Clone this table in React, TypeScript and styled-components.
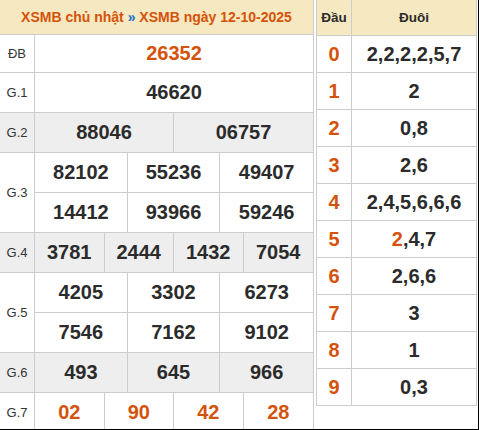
import React from "react";
import styled, { createGlobalStyle } from "styled-components";

const Global = createGlobalStyle`
  html, body { margin: 0; padding: 0; background: #fff; }
  body { font-family: "Liberation Sans", Arial, sans-serif; }
`;

const ORANGE = "#d4530a";
const BORDER = "#cccccc";
const HEAD_BG = "#f6e8c0";
const GRAY = "#eeeeee";

const Wrapper = styled.div`
  display: flex;
  width: 479px;
  height: 430px;
  box-sizing: border-box;
  border-right: 1px solid #000;
  border-bottom: 1px solid #000;
  overflow: hidden;
  align-items: flex-start;
`;

const LeftTable = styled.div`
  width: 314px;
  height: 100%;
  flex: none;
  box-sizing: border-box;
  border-right: 1px solid ${BORDER};
  display: flex;
  flex-direction: column;
`;

const TitleBar = styled.div`
  height: 35px;
  flex: none;
  box-sizing: border-box;
  border-bottom: 1px solid ${BORDER};
  background: ${HEAD_BG};
  display: flex;
  align-items: center;
  justify-content: center;
  font-weight: bold;
  font-size: 14px;
  color: ${ORANGE};
  white-space: nowrap;
`;

const Sep = styled.span`
  color: #1a6fc4;
`;

const PrizeRow = styled.div<{ $gray?: boolean }>`
  display: grid;
  grid-template-columns: 35px 1fr;
  background: ${(p) => (p.$gray ? GRAY : "#fff")};
  flex: none;
`;

const Label = styled.div`
  box-sizing: border-box;
  border-right: 1px solid ${BORDER};
  border-bottom: 1px solid ${BORDER};
  display: flex;
  align-items: center;
  justify-content: center;
  font-size: 13px;
  color: #333;
`;

const Cells = styled.div<{ $cols: number }>`
  display: grid;
  grid-template-columns: repeat(${(p) => p.$cols}, 1fr);
`;

const Cell = styled.div<{ $h: number; $accent?: boolean; $last?: boolean }>`
  height: ${(p) => p.$h}px;
  box-sizing: border-box;
  border-bottom: 1px solid ${BORDER};
  border-right: ${(p) => (p.$last ? "none" : `1px solid ${BORDER}`)};
  display: flex;
  align-items: center;
  justify-content: center;
  font-weight: bold;
  font-size: 20px;
  color: ${(p) => (p.$accent ? ORANGE : "#2b2b2b")};
`;

const RightTable = styled.div`
  margin-left: 2px;
  width: 161px;
  flex: none;
  box-sizing: border-box;
  border-left: 1px solid ${BORDER};
  border-right: 1px solid ${BORDER};
  display: grid;
  grid-template-columns: 35px 1fr;
`;

const HeadCell = styled.div<{ $first?: boolean }>`
  height: 36px;
  box-sizing: border-box;
  background: ${HEAD_BG};
  border-bottom: 1px solid ${BORDER};
  border-right: ${(p) => (p.$first ? `1px solid ${BORDER}` : "none")};
  display: flex;
  align-items: center;
  justify-content: center;
  font-weight: bold;
  font-size: 13.5px;
  color: #2b2b2b;
`;

const LotoCell = styled.div<{ $first?: boolean }>`
  height: 37px;
  box-sizing: border-box;
  border-bottom: 1px solid ${BORDER};
  border-right: ${(p) => (p.$first ? `1px solid ${BORDER}` : "none")};
  display: flex;
  align-items: center;
  justify-content: center;
  font-weight: bold;
  font-size: 20px;
  color: ${(p) => (p.$first ? ORANGE : "#2b2b2b")};
`;

const Hi = styled.span`
  color: ${ORANGE};
`;

type Prize = {
  label: string;
  rows: string[][];
  gray?: boolean;
  accent?: boolean;
  h?: number;
};

const prizes: Prize[] = [
  { label: "ĐB", rows: [["26352"]], accent: true, h: 38 },
  { label: "G.1", rows: [["46620"]] },
  { label: "G.2", rows: [["88046", "06757"]], gray: true },
  { label: "G.3", rows: [["82102", "55236", "49407"], ["14412", "93966", "59246"]] },
  { label: "G.4", rows: [["3781", "2444", "1432", "7054"]], gray: true },
  { label: "G.5", rows: [["4205", "3302", "6273"], ["7546", "7162", "9102"]] },
  { label: "G.6", rows: [["493", "645", "966"]], gray: true },
  { label: "G.7", rows: [["02", "90", "42", "28"]], accent: true },
];

const loto: [string, React.ReactNode][] = [
  ["0", "2,2,2,2,5,7"],
  ["1", "2"],
  ["2", "0,8"],
  ["3", "2,6"],
  ["4", "2,4,5,6,6,6"],
  ["5", (<><Hi>2</Hi>,4,7</>)],
  ["6", "2,6,6"],
  ["7", "3"],
  ["8", "1"],
  ["9", "0,3"],
];

export default function App() {
  return (
    <>
      <Global />
      <Wrapper>
        <LeftTable>
          <TitleBar>
            XSMB chủ nhật&nbsp;<Sep>»</Sep>&nbsp;XSMB ngày 12-10-2025
          </TitleBar>
          {prizes.map((p) => (
            <PrizeRow key={p.label} $gray={p.gray}>
              <Label>{p.label}</Label>
              <Cells $cols={p.rows[0].length}>
                {p.rows.flatMap((r, ri) =>
                  r.map((n, ci) => (
                    <Cell
                      key={`${ri}-${ci}`}
                      $h={p.h ?? 40}
                      $accent={p.accent}
                      $last={ci === r.length - 1}
                    >
                      {n}
                    </Cell>
                  ))
                )}
              </Cells>
            </PrizeRow>
          ))}
        </LeftTable>
        <RightTable>
          <HeadCell $first>Đầu</HeadCell>
          <HeadCell>Đuôi</HeadCell>
          {loto.map(([d, t]) => (
            <React.Fragment key={d}>
              <LotoCell $first>{d}</LotoCell>
              <LotoCell>{t}</LotoCell>
            </React.Fragment>
          ))}
        </RightTable>
      </Wrapper>
    </>
  );
}
